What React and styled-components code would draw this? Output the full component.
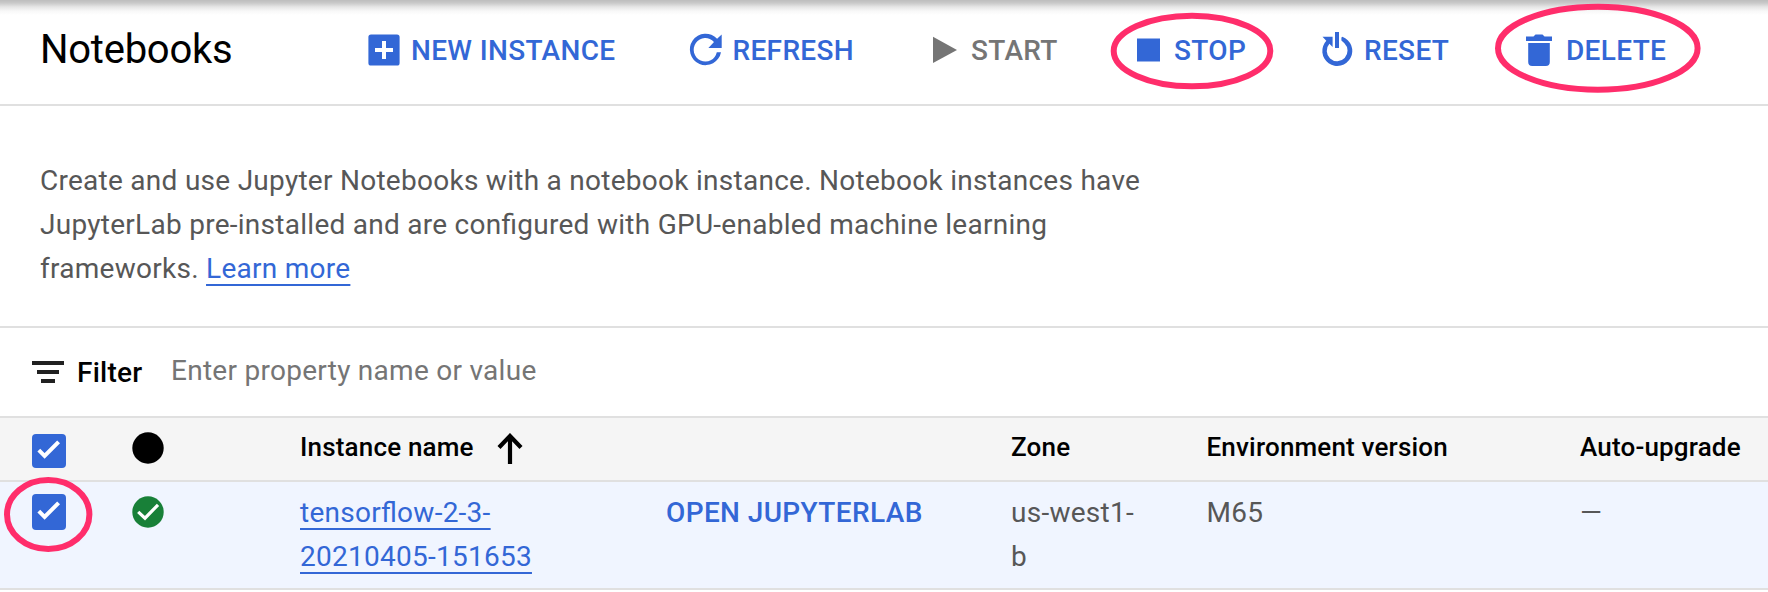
import React from "react";
import styled, { createGlobalStyle } from "styled-components";

const BLUE = "#3367d6";
const LINE = "#e0e0e0";
const PINK = "#ff2d6b";

const GlobalStyle = createGlobalStyle`
  * { box-sizing: border-box; }
  body {
    margin: 0;
    background: #fff;
    font-family: Roboto, "Liberation Sans", sans-serif;
    font-feature-settings: "liga" 1;
    overflow: hidden;
  }
`;

const Page = styled.main`
  position: relative;
  width: 1768px;
  height: 592px;
  overflow: hidden;
`;

const TopBar = styled.header`
  display: flex;
  align-items: center;
  height: 106px;
  padding: 0 0 6px 40px;
  border-bottom: 2px solid ${LINE};
  background: linear-gradient(#bdbdbd 0, #c9c9c9 3px, #e6e6e6 7px, #f8f8f8 11px, #fff 15px);
`;

const Title = styled.h1`
  width: 328px;
  margin: 0;
  padding-top: 2px;
  font-size: 40px;
  font-weight: 400;
  line-height: 48px;
  letter-spacing: -0.25px;
  color: #000;
`;

const Action = styled.button`
  display: flex;
  align-items: center;
  flex: none;
  width: ${(p) => p.$width}px;
  padding: 4px 0 0;
  border: 0;
  background: none;
  font: 500 28px/36px Roboto, "Liberation Sans", sans-serif;
  letter-spacing: 0.34px;
  color: ${(p) => (p.$muted ? "#757575" : BLUE)};
  white-space: nowrap;
`;

const ActionIcon = styled.svg`
  flex: none;
  width: ${(p) => p.$w}px;
  height: 36px;
  margin: -2px ${(p) => p.$gap}px 0 0;
  overflow: visible;
  fill: currentColor;
`;

const Intro = styled.section`
  height: 222px;
  padding: 53px 40px 0;
  border-bottom: 2px solid ${LINE};
`;

const IntroText = styled.p`
  width: 1130px;
  margin: 0;
  font-size: 28px;
  line-height: 44px;
  letter-spacing: 0.27px;
  color: #575757;
`;

const Link = styled.a`
  color: ${BLUE};
  text-decoration: underline 2px;
  text-underline-offset: 6px;
  text-decoration-skip-ink: none;
`;

const FilterBar = styled.div`
  display: flex;
  align-items: center;
  height: 90px;
  padding: 0 32px;
  border-bottom: 2px solid ${LINE};
`;

const FilterIcon = styled.svg`
  width: 32px;
  height: 24px;
  margin-right: 13px;
  fill: #212121;
`;

const FilterLabel = styled.span`
  width: 94px;
  padding-top: 2px;
  font-size: 28px;
  font-weight: 500;
  line-height: 36px;
  letter-spacing: 0.25px;
  color: #000;
`;

const Placeholder = styled.span`
  padding-bottom: 3px;
  font-size: 28px;
  line-height: 36px;
  letter-spacing: 0.27px;
  color: #757575;
`;

const Row = styled.div`
  display: grid;
  grid-template-columns: 100px 168px 366px 345px 195.5px 373.5px 1fr;
  height: ${(p) => (p.$head ? 64 : 108)}px;
  padding-left: 32px;
  border-bottom: 2px solid ${LINE};
  background: ${(p) => (p.$head ? "#f5f5f5" : "#f0f5ff")};
`;

const Cell = styled.div`
  padding-top: ${(p) => p.$top || 9}px;
  font-size: 28px;
  line-height: 44px;
  letter-spacing: 0.26px;
  color: #575757;
`;

const HeadCell = styled.div`
  display: flex;
  padding-top: ${(p) => p.$top || 9}px;
  font-size: 26px;
  font-weight: 500;
  line-height: 40px;
  letter-spacing: 0.18px;
  color: #000;
  white-space: nowrap;
`;

const SortArrow = styled.svg`
  width: 26px;
  height: 32px;
  margin: 6px 0 0 23px;
`;

const OpenLink = styled.a`
  font-weight: 500;
  letter-spacing: 0.38px;
  color: ${BLUE};
`;

const Box = styled.span`
  display: flex;
  align-items: center;
  justify-content: center;
  width: 34px;
  height: ${(p) => p.$h}px;
  border-radius: 4px;
  background: ${BLUE};
`;

const StatusIcon = styled.svg`
  display: block;
  width: 32px;
  height: 32px;
`;

const Marks = styled.svg`
  position: absolute;
  inset: 0;
  pointer-events: none;
  fill: none;
  stroke: ${PINK};
  stroke-width: 6;
`;

function Checkbox({ h }) {
  return (
    <Box $h={h}>
      <svg width="34" height="34" viewBox="0 0 34 34">
        <path d="M6.8 16.2L12.6 22L26.6 7.8" fill="none" stroke="#fff" strokeWidth="4" />
      </svg>
    </Box>
  );
}

export default function App() {
  return (
    <Page>
      <GlobalStyle />
      <TopBar>
        <Title>Notebooks</Title>
        <Action $width={322}>
          <ActionIcon $w={32} $gap={11} viewBox="0 0 32 36">
            <path fillRule="evenodd" d="M3 2.4H29a2.6 2.6 0 0 1 2.6 2.6V31a2.6 2.6 0 0 1-2.6 2.6H3A2.6 2.6 0 0 1 .4 31V5A2.6 2.6 0 0 1 3 2.4ZM14 9v7H7v4h7v7h4v-7h7v-4h-7V9Z" />
          </ActionIcon>
          NEW INSTANCE
        </Action>
        <Action $width={243}>
          <ActionIcon $w={32} $gap={10.5} viewBox="0 0 32 36">
            <path d="M27.1 6.8A15.7 15.7 0 1 0 31 20.2H26.8A11.7 11.7 0 1 1 24 9.9L18.4 16H31.7V2.4Z" />
          </ActionIcon>
          REFRESH
        </Action>
        <Action $width={204} $muted>
          <ActionIcon $w={24} $gap={14} viewBox="0 0 24 36">
            <path d="M0 4.8V31L24 18Z" />
          </ActionIcon>
          START
        </Action>
        <Action $width={185}>
          <ActionIcon $w={23} $gap={14} viewBox="0 0 23 36">
            <path d="M0 6.5H23V29.5H0Z" />
          </ActionIcon>
          STOP
        </Action>
        <Action $width={204}>
          <ActionIcon $w={30} $gap={12} viewBox="0 0 30 36">
            <path d="M13 0h4v16h-4ZM.5 4.8H10.6V15L7.4 11.8A10.4 10.4 0 1 0 22.4 11.3L19.4 8.4V5.4L20.4 4.8A15 15 0 1 1 4.3 8.7Z" />
          </ActionIcon>
          RESET
        </Action>
        <Action $width={150}>
          <ActionIcon $w={26} $gap={14} viewBox="0 0 26 36">
            <path d="M0 4.5H7.5L9.5 2.4H16.5L18.5 4.5H26V9H0ZM2.2 11H23.8V30a4 4 0 0 1-4 4H6.2a4 4 0 0 1-4-4Z" />
          </ActionIcon>
          DELETE
        </Action>
      </TopBar>

      <Intro>
        <IntroText>
          Create and use Jupyter Notebooks with a notebook instance. Notebook instances have
          JupyterLab pre-installed and are configured with GPU-enabled machine learning
          frameworks. <Link>Learn more</Link>
        </IntroText>
      </Intro>

      <FilterBar>
        <FilterIcon viewBox="0 0 32 24">
          <path d="M0 1H32V5H0ZM5 10H27V14H5ZM9 19H23V23H9Z" />
        </FilterIcon>
        <FilterLabel>Filter</FilterLabel>
        <Placeholder>Enter property name or value</Placeholder>
      </FilterBar>

      <Row $head>
        <HeadCell $top={16}><Checkbox h={34} /></HeadCell>
        <HeadCell $top={14}>
          <StatusIcon viewBox="0 0 32 32"><circle cx="16" cy="16" r="15.7" /></StatusIcon>
        </HeadCell>
        <HeadCell>
          Instance name
          <SortArrow viewBox="0 0 26 32">
            <path d="M13 31V3M2 14.5L13 3L24 14.5" fill="none" stroke="#000" strokeWidth="4.2" />
          </SortArrow>
        </HeadCell>
        <HeadCell />
        <HeadCell>Zone</HeadCell>
        <HeadCell>Environment version</HeadCell>
        <HeadCell>Auto-upgrade</HeadCell>
      </Row>

      <Row>
        <Cell $top={12}><Checkbox h={36} /></Cell>
        <Cell $top={14}>
          <StatusIcon viewBox="0 0 32 32">
            <circle cx="16" cy="16" r="15.7" fill="#188038" />
            <path d="M6.2 15.8L13 22.2L26 8.8" fill="none" stroke="#fff" strokeWidth="3.2" />
          </StatusIcon>
        </Cell>
        <Cell><Link>tensorflow-2-3-<br />20210405-151653</Link></Cell>
        <Cell><OpenLink>OPEN JUPYTERLAB</OpenLink></Cell>
        <Cell>us-west1-<br />b</Cell>
        <Cell>M65</Cell>
        <Cell>—</Cell>
      </Row>

      <Marks width="1768" height="592" viewBox="0 0 1768 592">
        <ellipse cx="1192" cy="51" rx="78.3" ry="35.3" />
        <ellipse cx="1597.8" cy="48.2" rx="99.8" ry="41.5" />
        <ellipse cx="48.2" cy="514.5" rx="41.2" ry="34.5" />
      </Marks>
    </Page>
  );
}
